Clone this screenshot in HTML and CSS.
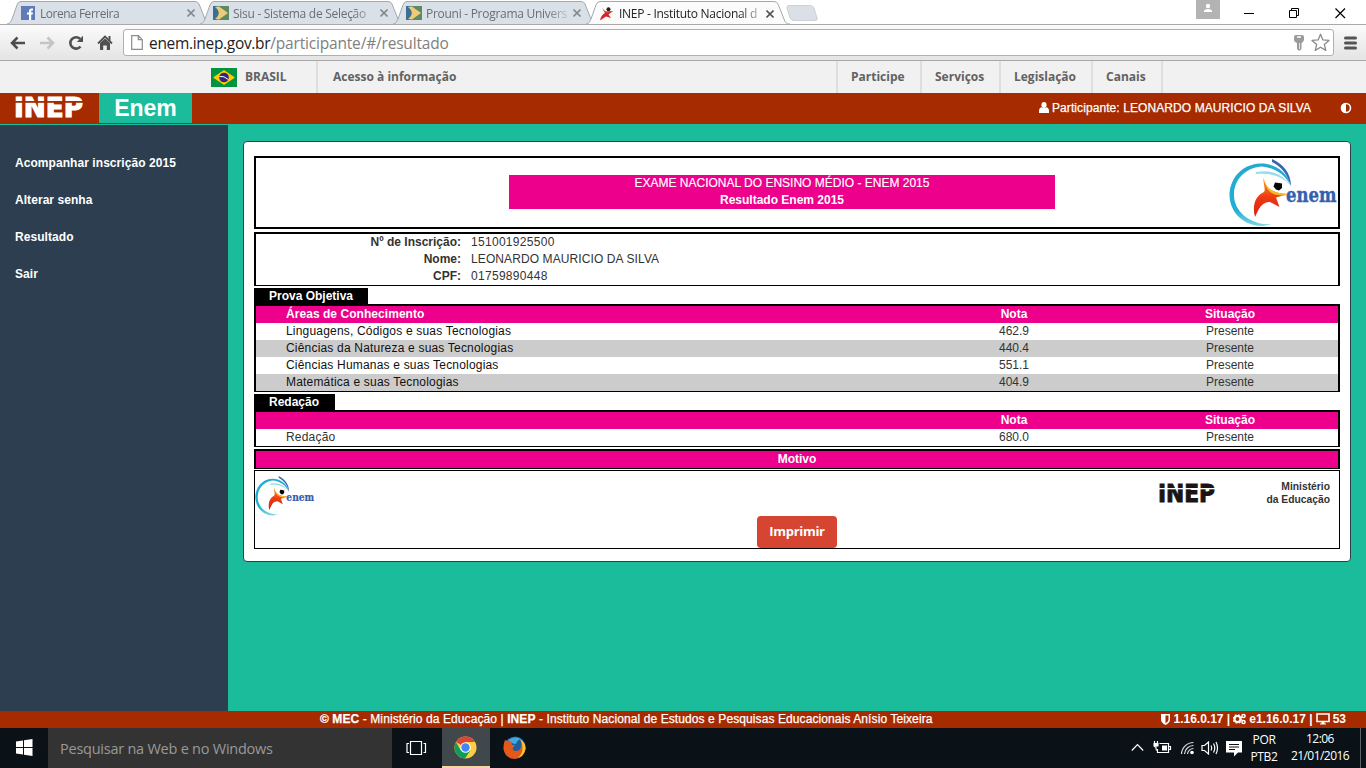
FILE: index.html
```html
<!DOCTYPE html>
<html lang="pt-BR">
<head>
<meta charset="utf-8">
<title>INEP - Instituto Nacional de Estudos e Pesquisas</title>
<link rel="stylesheet" href="styles.css">
</head>
<body>
<svg class="defs" width="0" height="0">
  <defs>
    <linearGradient id="suit" x1="0" y1="0" x2="0" y2="1"><stop offset="0" stop-color="#f59a1c"/><stop offset=".5" stop-color="#ee3a12"/><stop offset="1" stop-color="#d81e12"/></linearGradient>
    <linearGradient id="ring" x1="0" y1="0" x2="0" y2="1"><stop offset="0" stop-color="#25a9d0"/><stop offset=".75" stop-color="#1fb0d2"/><stop offset="1" stop-color="#7fd4e6"/></linearGradient>
    <symbol id="enem" viewBox="0 0 109 68">
      <path d="M62 27C58 11 43 4 31 4.500C12 5.500 .5 20 .5 37C1.500 55 16 67 33 67L43 65.500C20 66 5 52 5 36C5 20 17 9 32 7.500C44 8 56 15 62 27Z" fill="url(#ring)"/>
      <path d="M27 13C42 10 54 15 62 27C53 17 42 14 27 15Z" fill="#9adcec"/>
      <path d="M43 0C54 5 62 14 62 27C58 15 53 8 43 3Z" fill="#3a66b4"/>
      <path d="M34.500 19C37 29 42 34 59 35L47 38.500L50.500 48L41 43C32 43 30 50 26 58C23 47 26 37 35 33C37 31 34 24 34.500 19Z" fill="url(#suit)"/>
      <path d="M34.500 19C37 29 42 34 59 35L56 36.500C42 36.500 37 32 34.500 19Z" fill="#f7bd1d"/>
      <path d="M46 23.500L50 24L53 24.500L53 29L50 31.500L47 30.500L44.500 27.500Z" fill="#050505"/>
      <text x="57" y="42.500" font-family="DejaVu Serif" font-weight="bold" font-size="20" textLength="50.500" lengthAdjust="spacingAndGlyphs" fill="#3560ad" stroke="#3560ad" stroke-width=".4">enem</text>
    </symbol>
    <symbol id="mec" viewBox="0 0 16 14">
      <rect width="16" height="14" fill="#5d8a62"/><path d="M0 0H3C9 1 10 13 3 14H0Z" fill="#3b6f94"/><path d="M2 1L6 .5L15 7L6 13.500L2 13C7 9 7 5 2 1Z" fill="#efcb78"/>
    </symbol>
    <symbol id="tabshape" viewBox="0 0 204 24">
      <path d="M0 24C3 24 4 21 5 19L10 5Q11 1.500 14 1.500H188Q191 1.500 192 4L198 19C199 22 200 24 204 24" stroke="#a5a8ab"/>
    </symbol>
    <symbol id="x" viewBox="0 0 8 8"><path d="M.5 .5L7.500 7.500M7.500 .5L.5 7.500" fill="none" stroke="currentColor" stroke-width="1.600"/></symbol>
  </defs>
</svg>

<div class="tabs">
  <div class="tab"><svg class="shape"><use href="#tabshape"/></svg>
    <svg class="fav" width="14" height="14"><rect width="14" height="14" fill="#5f7bb8"/><path d="M8 14V8.500H6V6.500H8V5Q8 2.500 10.500 2.500H12V4.500H11Q10.200 4.500 10.200 5.300V6.500H12L11.700 8.500H10.200V14Z" fill="#fff"/></svg>
    <span class="title">Lorena Ferreira</span><svg class="close" width="8" height="8"><use href="#x"/></svg></div>
  <div class="tab"><svg class="shape"><use href="#tabshape"/></svg>
    <svg class="fav mecfav" width="16" height="14"><use href="#mec"/></svg>
    <span class="title wide">Sisu - Sistema de Seleção</span><svg class="close" width="8" height="8"><use href="#x"/></svg></div>
  <div class="tab"><svg class="shape"><use href="#tabshape"/></svg>
    <svg class="fav mecfav" width="16" height="14"><use href="#mec"/></svg>
    <span class="title wide">Prouni - Programa Univers</span><svg class="close" width="8" height="8"><use href="#x"/></svg></div>
  <div class="tab active"><svg class="shape"><use href="#tabshape"/></svg>
    <svg class="fav mecfav" width="16" height="14"><path d="M3 1L6.500 4.500L14 4L9.500 7.500L12 11L7 9.500L1 13.500Q2 8 6 6Z" fill="#d8232a"/><circle cx="9.500" cy="2.200" r="2" fill="#222"/><path d="M3 1L6.500 4.500L14 4L8 6Z" fill="#e05a20"/></svg>
    <span class="title wide">INEP - Instituto Nacional d</span><svg class="close" width="8" height="8"><use href="#x"/></svg></div>
  <svg class="newtab" width="34" height="18"><path d="M4 1.500H25Q28 1.500 29 4L32 14Q33 16.500 30 16.500H9Q6 16.500 5 14L2 4Q1.500 1.500 4 1.500Z" fill="#dbe0e6" stroke="#cdd1d6"/></svg>
  <div class="winctl">
    <svg width="24" height="19"><rect width="24" height="19" fill="#b3b3b3"/><circle cx="12" cy="6" r="2.200" fill="#fff"/><path d="M8 12V10.500Q9 9 12 9Q15 9 16 10.500V12Z" fill="#fff"/></svg>
    <svg class="min" width="10" height="20"><path d="M0 13.500H10" stroke="#000"/></svg>
    <svg class="max" width="11" height="20"><path d="M.5 10.500H7.500V17.500H.5ZM2.500 10V8.500H9.500V15.500H8" fill="none" stroke="#000"/></svg>
    <svg class="cls" width="11" height="20"><path d="M.5 8.500L10 18M10 8.500L.5 18" stroke="#000" stroke-width="1.200"/></svg>
  </div>
</div>

<div class="toolbar">
  <svg width="16" height="14" class="nav"><path d="M15 7H2M7.500 1.500L2 7L7.500 12.500" fill="none" stroke="#4d4d4d" stroke-width="2.500"/></svg>
  <svg width="16" height="14" class="nav"><path d="M1 7H14M8.500 1.500L14 7L8.500 12.500" fill="none" stroke="#c4c4c4" stroke-width="2.500"/></svg>
  <svg width="16" height="16" class="nav"><path d="M12.500 11.500A5.700 5.700 0 1 1 12 3.800" fill="none" stroke="#505050" stroke-width="2.600"/><path d="M15 .8V7H8.800Z" fill="#505050"/></svg>
  <svg width="16" height="16" class="nav"><path d="M1 8.500L8 1.500L15 8.500" fill="none" stroke="#505050" stroke-width="1.800"/><path d="M11.500 1H13.500V6L11.500 4Z M3 8L8 3.500L13 8V15H9.800V10.500H6.200V15H3Z" fill="#505050"/></svg>
  <div class="omni">
    <svg width="12" height="16"><path d="M.7 .7H7.300L11.300 4.700V14.300H.7ZM7.300 .7V4.700H11.300" fill="#fff" stroke="#8c8c8c" stroke-width="1.200"/></svg>
    <span class="url"><span class="host">enem.inep.gov.br</span>/participante/#/resultado</span>
    <svg class="key" width="10" height="16"><path d="M0 2Q0 0 2 0H8Q10 0 10 2V5Q9 7.500 7.500 8V14L6 15.500H4.500L3 14V8Q0 7 0 5Z" fill="#9a9a9a"/><path d="M3 2H7" stroke="#fff" stroke-width="1.500"/><path d="M5.500 8V14" stroke="#e3e3e3"/></svg>
    <svg class="star" width="19" height="19"><path d="M9.500 1.200L11.900 6.900L18 7.400L13.300 11.400L14.800 17.400L9.500 14.200L4.200 17.400L5.700 11.400L1 7.400L7.100 6.900Z" fill="#fff" stroke="#8a8a8a" stroke-width="1.300" stroke-linejoin="round"/></svg>
  </div>
  <svg width="13" height="14"><path d="M1.500 2H11.500M1.500 7H11.500M1.500 12H11.500" stroke="#555" stroke-width="3" stroke-linecap="round"/></svg>
</div>

<div class="gov">
  <svg width="26" height="19"><rect width="26" height="19" fill="#009440"/><path d="M2 9.500L13 2L24 9.500L13 17Z" fill="#ffcb00"/><circle cx="13" cy="9.500" r="4.800" fill="#302681"/><path d="M8.500 8.500Q13 7.500 17.300 11.500" fill="none" stroke="#fff"/></svg>
  <div class="g-br">BRASIL</div>
  <div class="g-ac">Acesso à informação</div>
  <div class="g1">Participe</div>
  <div class="g2">Serviços</div>
  <div class="g3">Legislação</div>
  <div class="g4">Canais</div>
</div>

<header class="head">
  <svg class="inep" width="72" height="24"><text x="0" y="20.500" font-family="DejaVu Sans" font-weight="bold" font-size="26.500" textLength="69" lengthAdjust="spacingAndGlyphs" fill="#fff" stroke="#fff" stroke-width="1.200">INEP</text><rect y="5" width="72" height="1.800" fill="#a62b00"/></svg>
  <div class="brand">Enem</div>
  <svg class="user" width="10" height="11"><ellipse cx="5" cy="3" rx="2.600" ry="3" fill="#fff"/><path d="M0 11V8.500Q.3 5.500 2.800 5.200Q5 7 7.200 5.200Q9.700 5.500 10 8.500V11Z" fill="#fff"/></svg>
  <span class="part">Participante: LEONARDO MAURICIO DA SILVA</span>
  <svg class="contrast" width="12" height="12"><circle cx="6" cy="6" r="4.500" fill="none" stroke="#fff" stroke-width="1.600"/><path d="M6 1A5 5 0 0 0 6 11Z" fill="#fff"/></svg>
</header>

<div class="body">
  <nav class="side">
    <a>Acompanhar inscrição 2015</a><a>Alterar senha</a><a>Resultado</a><a>Sair</a>
  </nav>
  <main class="main">
    <section class="card">
      <div class="box title-box">
        <div class="pink"><div>EXAME NACIONAL DO ENSINO MÉDIO - ENEM 2015</div><div class="b">Resultado Enem 2015</div></div>
        <svg class="logo" width="109" height="68"><use href="#enem"/></svg>
      </div>
      <div class="box info">
        <b>Nº de Inscrição:</b><span class="num">151001925500</span>
        <b>Nome:</b><span class="name">LEONARDO MAURICIO DA SILVA</span>
        <b>CPF:</b><span class="num">01759890448</span>
      </div>
      <div class="tag tag1">Prova Objetiva</div>
      <div class="box grid">
        <div class="row th"><span>Áreas de Conhecimento</span><span>Nota</span><span>Situação</span></div>
        <div class="row k"><span>Linguagens, Códigos e suas Tecnologias</span><span>462.9</span><span>Presente</span></div>
        <div class="row k alt"><span>Ciências da Natureza e suas Tecnologias</span><span>440.4</span><span>Presente</span></div>
        <div class="row k"><span>Ciências Humanas e suas Tecnologias</span><span>551.1</span><span>Presente</span></div>
        <div class="row k alt"><span>Matemática e suas Tecnologias</span><span>404.9</span><span>Presente</span></div>
      </div>
      <div class="tag tag2">Redação</div>
      <div class="box grid">
        <div class="row th"><span></span><span>Nota</span><span>Situação</span></div>
        <div class="row"><span>Redação</span><span>680.0</span><span>Presente</span></div>
      </div>
      <div class="box motivo">Motivo</div>
      <div class="foot">
        <div class="logos">
          <svg width="60" height="40" viewBox="0 0 109 68" preserveAspectRatio="none"><use href="#enem" width="109" height="68"/></svg>
          <svg class="inep2" width="59" height="22"><text x="0" y="19" font-family="DejaVu Sans" font-weight="bold" font-size="24.500" textLength="57" lengthAdjust="spacingAndGlyphs" fill="#1c1412" stroke="#1c1412" stroke-width="1">INEP</text><rect y="5" width="59" height="1.300" fill="#fff"/></svg>
          <div class="min-ed">Ministério<br>da Educação</div>
        </div>
        <button class="btn">Imprimir</button>
      </div>
    </section>
  </main>
</div>

<footer class="footer">
  <span class="copy"><b>© MEC</b> - Ministério da Educação | <b>INEP</b> - Instituto Nacional de Estudos e Pesquisas Educacionais Anísio Teixeira</span>
  <div class="ver">
    <svg width="9" height="11"><path d="M0 0H9V6Q8.500 9 4.500 11Q.5 9 0 6Z" fill="#fff"/><path d="M4.500 1.500H7.500V6Q7 8 4.500 9.300Z" fill="#a62b00"/></svg><span>1.16.0.17 |</span>
    <svg width="13" height="12"><circle cx="4.500" cy="6" r="3" fill="none" stroke="#fff" stroke-width="2.200"/><circle cx="4.500" cy="6" r="4.200" fill="none" stroke="#fff" stroke-width="1.200" stroke-dasharray="1.700 1.600"/><circle cx="10.500" cy="3" r="1.600" fill="none" stroke="#fff" stroke-width="1.500"/><circle cx="10.500" cy="9" r="1.600" fill="none" stroke="#fff" stroke-width="1.500"/></svg><span>e1.16.0.17 |</span>
    <svg width="14" height="12"><path d="M1 1H13V8.500H1Z" fill="none" stroke="#fff" stroke-width="1.600"/><path d="M5.500 8H8.500V10.500H10V11.500H4V10.500H5.500Z" fill="#fff"/></svg><span>53</span>
  </div>
</footer>

<div class="taskbar">
  <div class="start"><svg width="17" height="17"><path d="M0 2.400L7 1.400V8H0ZM8 1.200L16.500 0V8H8ZM0 9H7V15.600L0 14.600ZM8 9H16.500V17L8 15.800Z" fill="#fff"/></svg></div>
  <div class="search">Pesquisar na Web e no Windows</div>
  <div class="tv"><svg width="21" height="16"><path d="M4.500 1.500H15.500V14.500H4.500ZM3 3.500H1V12.500H3M17.500 3.500H19.500V12.500H17.500" fill="none" stroke="#fff" stroke-width="1.200"/></svg></div>
  <div class="chrome"><svg width="23" height="23" viewBox="0 0 24 24"><circle cx="12" cy="12" r="11.500" fill="#ffcd40"/><path d="M12 12L2.040 6.250A11.500 11.500 0 0 1 21.960 6.250H12Z" fill="#db4437"/><path d="M2.040 6.250A11.500 11.500 0 0 0 11.500 23.500L17 15L12 12L7 14.900Z" fill="#0f9d58"/><circle cx="12" cy="12" r="5.500" fill="#fff"/><circle cx="12" cy="12" r="4.400" fill="#4285f4"/></svg></div>
  <div class="ff"><svg width="23" height="24"><circle cx="12" cy="11" r="10.500" fill="#1d5f9e"/><path d="M5 4Q12-1 18 3Q14 4 13 8Q9 8 5 4Z" fill="#45a8dc"/><path d="M2 4Q4 5 6 5Q9 6 9 9L12 9L10 12Q9 15 13 15Q17 15 18 11Q19 6 17 3Q23 7 22.500 13Q21 22 12 23Q2 22.500 .5 13Q.3 8 2 4Z" fill="#e3591b"/><path d="M17 3Q23 7 22.500 13Q21 20 15 22Q20 17 19.500 11Q19 6 17 3Z" fill="#fbc22d"/></svg></div>
  <svg class="tray" width="112" height="20">
    <g fill="none" stroke="#fff" stroke-width="1.200">
      <path d="M.8 12.500L6.500 6.500L12.200 12.500"/>
      <path d="M28.500 5.500H37.500V14.500H26.500V11M38 8.500H39.500V11.500H38"/><path d="M23.500 3V8Q23.500 9 25 9V11Q25 12.500 27 12.500M26.500 3V8"/>
      <path d="M50.500 16A12 12 0 0 1 62.500 4.500M53.500 16A9 9 0 0 1 62.500 7.500M56.500 16A6 6 0 0 1 62.500 10.500" stroke="#ddd"/>
      <path d="M71 7.500H73.500L77.500 4V16L73.500 12.500H71ZM80 7.500Q81.500 10 80 12.500M82.500 5.500Q85 10 82.500 14.500M85 4Q88 10 85 16"/>
    </g>
    <rect x="22.500" y="5" width="5" height="3.500" fill="#fff"/><rect x="31" y="7.500" width="5" height="5" fill="#fff"/><circle cx="61" cy="14.500" r="1.800" fill="#fff"/>
    <path d="M95 3H111V14.500H107L103 18.500V14.500H95Z" fill="#fff"/><path d="M98 6.500H108M98 9H108M98 11.500H104" stroke="#0a1015"/>
  </svg>
  <div class="lang">POR<br>PTB2</div>
  <div class="clock">12:06<br>21/01/2016</div>
</div>
</body>
</html>
```
FILE: styles.css
```css
* { box-sizing: border-box; }
body { margin: 0; width: 1366px; height: 768px; overflow: hidden; display: flex; flex-direction: column; font: 12px/17px "Liberation Sans", Arial, sans-serif; color: #333; background: #1abc9c; }
svg { display: block; flex: none; }
.defs { position: absolute; }

.tabs { height: 24px; flex: none; display: flex; padding-left: 7px; background: #fff; position: relative; z-index: 1; }
.tab { position: relative; width: 203px; height: 24px; margin-right: -10px; flex: none; display: flex; align-items: center; padding: 2px 12px 0 14px; font: 12px/17px "Open Sans", sans-serif; letter-spacing: -.48px; color: #6b6e72; }
.tab > * { position: relative; }
.tab > .shape { position: absolute; left: 0; top: 0; width: 204px; height: 24px; fill: #dae0e7; }
.tab.active { color: #222; height: 25px; z-index: 2; }
.tab.active > .shape { fill: #fbfbfb; }
.fav { margin-right: 3px; width: 16px; }
.mecfav { margin: 0 4px 0 -1px; }
.title { width: 141px; white-space: nowrap; -webkit-mask-image: linear-gradient(90deg, #000 120px, rgba(0,0,0,.25) 141px); }
.wide { letter-spacing: -.28px; }
.close { margin-left: 6px; color: #88898c; }
.active .close { color: #555; }
.newtab { margin: 4px 0 0 6px; }
.winctl { margin-left: auto; display: flex; padding-right: 20px; }
.winctl > svg:first-child { margin-right: -1px; }
.min { margin-left: 25px; }
.max { margin-left: 35px; }
.cls { margin-left: 35px; }

.toolbar { height: 37px; flex: none; display: flex; align-items: center; padding: 0 9px 0 10px; border-top: 1px solid #a9a9a9; border-bottom: 1px solid #a9a9a9; background: linear-gradient(#fbfbfb, #e4e4e4); }
.nav { margin-right: 13px; }
.omni { width: 1211px; height: 27px; margin: 0 10px 0 -3px; flex: none; display: flex; align-items: center; padding: 0 3px 0 7px; border: 1px solid #b0b0b0; border-radius: 3px; background: #fff; }
.url { margin-left: 6px; font: 15.500px/22px "Open Sans", sans-serif; letter-spacing: -.18px; color: #808080; }
.host { color: #222; letter-spacing: -.32px; }
.key { margin-left: auto; }
.star { margin-left: 7px; }

.gov { height: 32px; flex: none; display: flex; align-items: center; padding-left: 211px; background: #f1f1f1; font: bold 12px/32px "Open Sans", sans-serif; color: #626262; }
.gov > div { height: 32px; border-right: 2px solid #dedede; }
.g-br { width: 81px; padding-left: 8px; }
.g-ac { width: 520px; padding-left: 15px; }
.g1 { width: 84px; padding-left: 13px; }
.g2 { width: 79px; padding-left: 13px; }
.g3 { width: 92px; padding-left: 13px; }
.g4 { width: 70px; padding-left: 13px; }

.head { height: 31px; flex: none; display: flex; background: #a62b00; color: #fff; }
.inep { margin: 3px 13px 0 14px; overflow: visible; }
.brand { width: 93px; height: 30px; background: #1abc9c; text-align: center; font: bold 23px/31px "Liberation Sans", Arial, sans-serif; }
.user { margin: 9px 3px 0 auto; }
.part { margin-top: 7px; letter-spacing: .085px; -webkit-text-stroke: .25px #fff; }
.contrast { margin: 9px 14px 0 29px; }

.body { flex: 1; display: flex; border-top: 1px solid #1abc9c; min-height: 0; }
.side { width: 228px; padding: 20px 15px; background: #2d3e50; color: #fff; font-weight: bold; letter-spacing: .06px; }
.side a { display: block; height: 37px; line-height: 37px; }
.main { flex: 1; padding: 16px 15px; }
.card { height: 421px; padding: 14px 10px 0; background: #fff; border: 1px solid #2c3e50; border-radius: 4px; }
.box { border: 2px solid #000; border-bottom-width: 1px; }
.title-box { height: 73px; border-bottom-width: 2px; display: flex; justify-content: flex-end; margin-bottom: 3px; }
.pink { width: 546px; height: 34px; margin: 17px auto 0 253px; background: #ec008c; color: #fff; text-align: center; }
.pink > div:first-child { -webkit-text-stroke: .15px #fff; }
.b { font-weight: bold; }
.logo { margin-top: 1px; }
.info { height: 54px; margin-bottom: 2px; display: grid; grid-template-columns: 205px 1fr; column-gap: 10px; }
.info b { text-align: right; }
.num { letter-spacing: .3px; }
.name { letter-spacing: .1px; }
.tag { height: 16px; padding-left: 15px; background: #000; color: #fff; font-weight: bold; line-height: 16px; }
.tag1 { width: 114px; }
.tag2 { width: 81px; }
.grid { margin-bottom: 2px; }
.row { display: grid; grid-template-columns: 650px 216px 216px; height: 17px; }
.row > span { text-align: center; }
.row > span:first-child { text-align: left; padding-left: 30px; letter-spacing: .19px; }
.k > span:first-child { color: #111; }
.row.th { background: #ec008c; color: #fff; font-weight: bold; }
.row.th > span:first-child { letter-spacing: .05px; }
.alt { background: #ccc; }
.motivo { height: 20px; background: #ec008c; color: #fff; font-weight: bold; text-align: center; margin-bottom: 1px; }
.foot { height: 79px; border: 1px solid #000; }
.logos { height: 45px; display: flex; padding: 5px 9px 0 0; }
.inep2 { margin: 7px 0 0 auto; overflow: visible; }
.min-ed { width: 65px; margin: 4px 0 0 48px; text-align: right; font-weight: bold; font-size: 10.300px; line-height: 13px; white-space: nowrap; }
.btn { display: block; width: 80px; height: 32px; margin: 0 auto; border: 0; border-radius: 4px; background: #d64531; color: #fff; font: bold 13px/30px "Open Sans", sans-serif; letter-spacing: -.3px; padding: 0 0 2px; }

.footer { height: 17px; flex: none; display: flex; padding: 0 20px 0 320px; background: #a62b00; color: #fff; }
.copy { line-height: 16px; letter-spacing: .095px; -webkit-text-stroke: .25px #fff; }
.ver { height: 16px; margin-left: auto; display: flex; align-items: center; gap: 3px; font-weight: bold; line-height: 16px; }

.taskbar { height: 40px; flex: none; display: flex; background: #0a1218; color: #fff; font: 12px/17px "Open Sans", sans-serif; }
.start { width: 48px; padding: 11px 0 0 16px; }
.search { width: 344px; padding-left: 12px; background: #333; color: #999; font-size: 14.500px; letter-spacing: -.24px; line-height: 41px; }
.tv { width: 50px; padding: 12px 0 0 14px; }
.chrome { width: 48px; padding: 8px 0 0 12px; background: #40484c; border-bottom: 2px solid #fad3a5; }
.ff { padding: 8px 0 0 13px; }
.tray { margin: 10px 0 0 auto; }
.lang { width: 34px; margin: 3px 0 0 4px; text-align: center; letter-spacing: -.3px; }
.clock { width: 66px; margin: 3px 7px 0 6px; text-align: center; letter-spacing: -.55px; line-height: 16.500px; }
.taskbar::after { content: ""; width: 5px; border-left: 1px solid #59636a; }
```
